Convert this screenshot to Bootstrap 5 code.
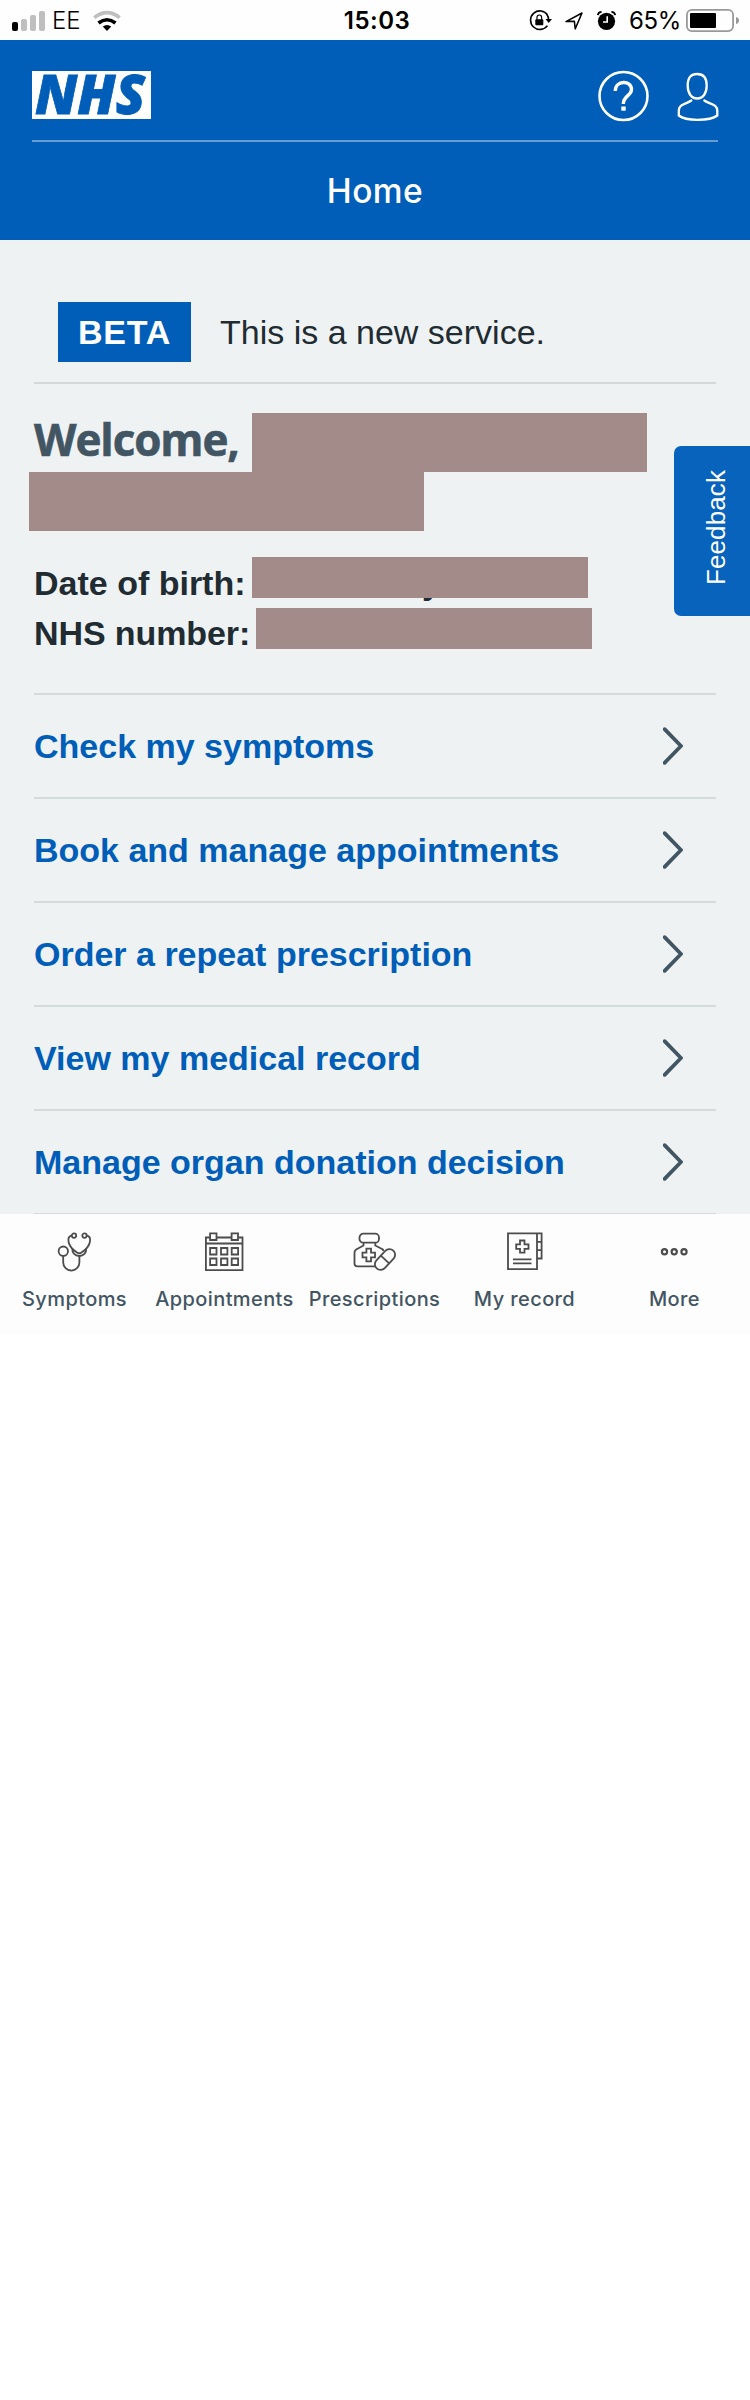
<!DOCTYPE html>
<html lang="en">
<head>
<meta charset="utf-8">
<meta name="viewport" content="width=device-width, initial-scale=1">
<title>NHS App - Home</title>
<link href="https://cdn.jsdelivr.net/npm/bootstrap@5.3.0/dist/css/bootstrap.min.css" rel="stylesheet">
<style>
body{background:#fff;color:#212b32;font-family:"Liberation Sans",Arial,sans-serif;font-size:34px;line-height:1;overflow-x:hidden}
svg{display:block;flex:none;overflow:visible}
.status{height:40px;background:#fefefe;color:#000;font-family:Inter,sans-serif;font-size:24px;line-height:30px;padding:1px 11px 0 12px}
.status .side{width:300px}
.clock{font-weight:600;letter-spacing:.5px;margin-left:3px}
.carrier{margin:0 12px 0 7px;font-weight:300}
.arrow-icon{margin:0 14px 0 13px}
.battery-text{width:51px;margin:0 6px 0 13px;letter-spacing:-.3px}
.app-header{height:200px;background:#005eb8;color:#fff;padding:0 32px}
.brand-row{height:102px;padding-top:31px;border-bottom:2px solid #669ed4}
.header-icons{gap:29px;margin-right:-2px}
.page-name{height:98px;font-family:Inter,sans-serif;font-weight:500;font-size:33.5px;letter-spacing:.5px;margin:0}
.content{background:#eef2f3;padding:0 34px}
.beta-row{height:144px;padding:62px 0 0 24px;border-bottom:2px solid #d5d7d9}
.beta-tag{width:133px;height:60px;background:#005eb8;color:#fff;font-weight:700;margin-right:29px;letter-spacing:.8px}
.beta-text{height:60px}
.greeting{padding-top:29px}
.hello{font-family:"Open Sans",sans-serif;font-weight:700;font-size:44px;color:#425563;line-height:52px;letter-spacing:-1.1px;width:218px;margin:0;-webkit-text-stroke:.6px #425563}
.redacted{background:#a38b89}
.name-part{width:395px;height:59px}
.name-2{margin-left:-5px}
.facts{padding-top:27px;height:162px}
.fact{height:50px;font-weight:700;line-height:50px}
.value{width:336px;height:41px}
.dob{width:218px}
.num{width:222px;letter-spacing:-.1px}
.dob-value{margin-top:-1px}
.peek{left:170px;top:0}
.tasks{--bs-list-group-bg:transparent;border-top:2px solid #d5dadb}
.tasks>.task.list-group-item{height:104px;padding:0 33px 0 0;background:transparent;border:0 solid #d5dadb;border-bottom-width:2px;border-radius:0;color:#005eb8;font-weight:700}
.feedback{right:0;top:446px;width:76px;height:170px;padding:0 0 8px 8px;background:#0763bc;color:#fff;border-radius:7px 0 0 7px;font-size:26px;letter-spacing:.1px}
.feedback span{writing-mode:vertical-rl;transform:rotate(180deg)}
.tabs{height:120px;margin-top:-1px;background:#fdfdfd}
.tabs .tab{color:#425563;font-family:Inter,sans-serif;font-weight:500;font-size:20px;line-height:20px;letter-spacing:.4px;padding-top:17px;text-decoration:none;width:150px}
.tabs .tab:first-child{margin-left:-1px}
.tabs .tab span{padding-left:1px}
.tabs svg{margin-bottom:18px;fill:none;stroke:#4c4c4c;stroke-width:1.8}
</style>
</head>
<body class="position-relative">
<svg class="d-none"><symbol id="chevron" viewBox="0 0 20 38"><path d="M1.600 2.200L18 19L1.600 35.800" fill="none" stroke="#425563" stroke-width="3.800" stroke-linecap="round" stroke-linejoin="round"/></symbol></svg>
<div class="status d-flex align-items-center justify-content-between">
  <div class="side d-flex align-items-center">
    <svg width="33" height="20" viewBox="0 0 33 20"><rect y="11" width="6" height="9" rx="2"/><g fill="#bfbfbf"><rect x="9" y="8" width="6" height="12" rx="2"/><rect x="18" y="4" width="6" height="16" rx="2"/><rect x="27" width="6" height="20" rx="2"/></g></svg>
    <span class="carrier">EE</span>
    <svg width="28" height="20" viewBox="0 0 28 20"><g fill="none" stroke-width="3.600"><path d="M1.300 6.600Q14-3.500 26.700 6.600" stroke="#bfbfbf"/><path d="M5.500 12Q14 5.500 22.500 12" stroke="#000"/></g><path d="M9.800 15.600Q14 12.200 18.200 15.600L14 20Z"/></svg>
  </div>
  <span class="clock">15:03</span>
  <div class="side d-flex align-items-center justify-content-end">
    <svg width="23" height="21" viewBox="0 0 23 21"><path d="M18.600 5A9.300 9.300 0 1 0 18.400 15.600M17.600 4Q19.800 7 19.600 10" fill="none" stroke="#000" stroke-width="1.600"/><path d="M16.500 9h6.500l-3.300 4z"/><rect x="6.300" y="9.200" width="8" height="6" rx="1"/><path d="M8 10V7.300a2.300 2.300 0 0 1 4.600 0V10" fill="none" stroke="#000" stroke-width="1.200"/></svg>
    <svg class="arrow-icon" width="18" height="18" viewBox="0 0 18 18"><path d="M1 9.600L17 1L10.200 16.900L9.400 9.300Z" fill="none" stroke="#000" stroke-width="1.500" stroke-linejoin="round"/></svg>
    <svg width="19" height="19" viewBox="0 0 19 19"><circle cx="9.500" cy="10.300" r="8.600"/><path d="M.8 4.200Q1.300 1 4.600.9M18.200 4.200Q17.700 1 14.400.9" fill="none" stroke="#000" stroke-width="1.700"/><path d="M10.200 5.200V11H6" fill="none" stroke="#fff" stroke-width="1.600"/></svg>
    <span class="battery-text">65%</span>
    <svg width="53" height="23" viewBox="0 0 53 23"><rect x=".9" y=".9" width="46.200" height="21.200" rx="5" fill="none" stroke="#999" stroke-width="1.800"/><rect x="4" y="4" width="26" height="15" rx="1"/><path d="M50 8Q53 8.500 53 11.500T50 15Z" fill="#999"/></svg>
  </div>
</div>
<header class="app-header">
  <div class="brand-row d-flex justify-content-between align-items-start">
    <svg width="119" height="48" viewBox="0 0 119 48"><rect width="119" height="48" fill="#fff"/><text x="3" y="43.300" font-family="Open Sans" font-weight="800" font-style="italic" font-size="54" textLength="110" lengthAdjust="spacingAndGlyphs" fill="#005eb8" stroke="#005eb8" stroke-width=".8">NHS</text></svg>
    <div class="header-icons d-flex">
      <svg width="51" height="50" viewBox="0 0 51 50"><circle cx="25.500" cy="25" r="24" fill="none" stroke="#fff" stroke-width="2.600"/><path d="M17.300 20C17.300 9 33.500 9 33.500 18.500C33.500 25 25.300 24.500 25.300 33" fill="none" stroke="#fff" stroke-width="3.400"/><rect x="23.300" y="35.500" width="4.400" height="4.200" fill="#fff"/></svg>
      <svg width="42" height="50" viewBox="0 0 42 50"><g fill="none" stroke="#fff" stroke-width="2.300" stroke-linecap="round"><path d="M19.200 3C13 3 9.700 6.500 9.700 14.500C9.700 22.500 13.500 27.500 19.200 27.500S28.700 22.500 28.700 14.500C28.700 6.500 25.500 3 19.200 3Z"/><path d="M13.300 29.500C8 33.500 .8 32.500 .8 40V44.500C4.500 47.500 12 48.800 19.600 48.800S35.500 47.500 39.300 44.500V40C39.300 32.500 31.500 33.500 26.300 29.500"/></g></svg>
    </div>
  </div>
  <h1 class="page-name d-flex align-items-center justify-content-center">Home</h1>
</header>
<main class="content">
  <div class="beta-row d-flex">
    <div class="beta-tag d-flex align-items-center justify-content-center">BETA</div>
    <div class="beta-text d-flex align-items-center">This is a new service.</div>
  </div>
  <div class="greeting d-flex"><h2 class="hello">Welcome,</h2><div class="redacted name-part"></div></div>
  <div class="redacted name-part name-2"></div>
  <div class="facts">
    <div class="fact d-flex"><span class="dob">Date of birth:</span><div class="value dob-value position-relative"><span class="peek position-absolute">y</span><div class="redacted value position-relative"></div></div></div>
    <div class="fact d-flex"><span class="num">NHS number:</span><div class="redacted value"></div></div>
  </div>
  <div class="tasks list-group list-group-flush rounded-0">
    <a href="#" class="task list-group-item d-flex align-items-center justify-content-between">Check my symptoms<svg width="20" height="38"><use href="#chevron"/></svg></a>
    <a href="#" class="task list-group-item d-flex align-items-center justify-content-between">Book and manage appointments<svg width="20" height="38"><use href="#chevron"/></svg></a>
    <a href="#" class="task list-group-item d-flex align-items-center justify-content-between">Order a repeat prescription<svg width="20" height="38"><use href="#chevron"/></svg></a>
    <a href="#" class="task list-group-item d-flex align-items-center justify-content-between">View my medical record<svg width="20" height="38"><use href="#chevron"/></svg></a>
    <a href="#" class="task list-group-item d-flex align-items-center justify-content-between">Manage organ donation decision<svg width="20" height="38"><use href="#chevron"/></svg></a>
  </div>
</main>
<nav class="tabs d-flex position-relative">
  <a href="#" class="tab d-flex flex-column align-items-center">
    <svg width="42" height="40" viewBox="0 0 42 40"><circle cx="10.300" cy="20.200" r="4.700"/><circle cx="21" cy="4.600" r="2.200"/><circle cx="31.500" cy="4.600" r="2.200"/><path d="M18.800 4.300C15.500 5 15 8 15.600 11C16.500 15.500 20 19 24 21.500Q26.200 23 28.500 21.500C32.500 19 36 15.500 36.900 11C37.500 8 37 5 33.700 4.300"/><path d="M19.300 17.500C19 22 22 25 26.300 25S33.500 22 33.200 17.500"/><path d="M10.200 25V31.500A8.100 8.100 0 0 0 26.400 31.500V25"/></svg><span>Symptoms</span></a>
  <a href="#" class="tab d-flex flex-column align-items-center">
    <svg width="42" height="40" viewBox="0 0 42 40"><path d="M7 6.500H2.900V39.100H39.500V6.500H35.500M14 6.500H28.500M2.900 12.500H39.500"/><path d="M7.100 2.300H13.500V9H7.100ZM28.600 2.300H35V9H28.600ZM7.100 17H13.500V23.500H7.100ZM18 17H24.400V23.500H18ZM28.700 17H35.100V23.500H28.700ZM7.100 27.500H13.500V34H7.100ZM18 27.500H24.400V34H18ZM28.700 27.500H35.100V34H28.700Z"/></svg><span>Appointments</span></a>
  <a href="#" class="tab d-flex flex-column align-items-center">
    <svg width="42" height="40" viewBox="0 0 42 40"><rect x="6.500" y="2.700" width="19.500" height="9" rx="3.800"/><path d="M10.500 12V14.500L2.800 18.800Q1.500 20 1.500 21.500V32.500Q1.500 35.400 4.500 35.400H22M22.300 12V14.500L30 18.500V20"/><path d="M13.400 17.700H18V21.700H22V26.300H18V30.300H13.400V26.300H9.500V21.700H13.400Z"/><g transform="rotate(-47 32 28.500)"><rect x="19.800" y="22.800" width="24.400" height="11.400" rx="5.700" fill="#fdfdfd"/><path d="M32 22.800V34.200"/></g></svg><span>Prescriptions</span></a>
  <a href="#" class="tab d-flex flex-column align-items-center">
    <svg width="42" height="40" viewBox="0 0 42 40"><path d="M5 2.300H34V38.200H5ZM34 2.300H38.600V27.500H34M34 10.800H38.600M34 19.200H38.600M10 28.400H28.500M10 32.300H28.500"/><path d="M17 9.500H21.500V13.300H25.500V17.800H21.500V21.600H17V17.800H13.200V13.300H17Z"/></svg><span>My record</span></a>
  <a href="#" class="tab d-flex flex-column align-items-center">
    <svg width="42" height="40" viewBox="0 0 42 40"><g stroke-width="2.200"><circle cx="11.500" cy="20.800" r="2.600"/><circle cx="21.200" cy="20.800" r="2.600"/><circle cx="31" cy="20.800" r="2.600"/></g></svg><span>More</span></a>
</nav>
<a href="#" class="feedback position-absolute d-flex align-items-center justify-content-center text-decoration-none"><span>Feedback</span></a>
<script src="https://cdn.jsdelivr.net/npm/bootstrap@5.3.0/dist/js/bootstrap.bundle.min.js"></script>
</body>
</html>
